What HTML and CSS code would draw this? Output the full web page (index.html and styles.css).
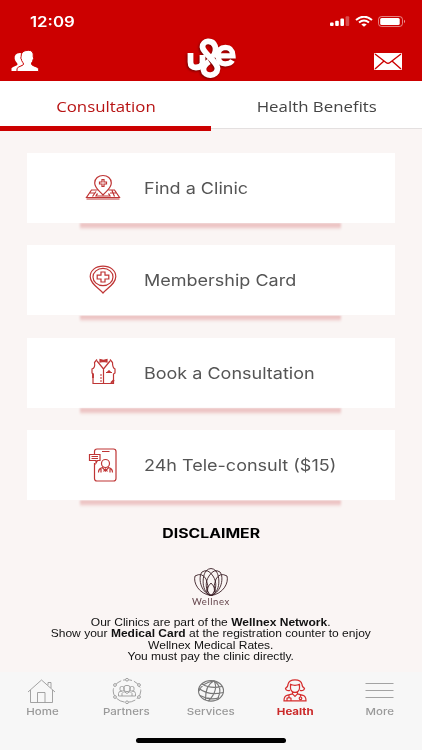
FILE: index.html
```
<!DOCTYPE html>
<html lang="en">
<head>
  <meta charset="UTF-8" />
  <meta name="viewport" content="width=device-width, initial-scale=1.0" />
  <title>Health - Consultation</title>
  <link rel="stylesheet" href="styles.css">
</head>
<body>
  <header class="header">
    <div class="statusbar">
      <span class="time wide">12:09</span>
      <div class="status-icons">
        <svg width="20" height="12" viewBox="0 0 20 12" fill="#fff">
          <rect x="0" y="6.5" width="3.6" height="3.5" rx="1"/>
          <rect x="5.2" y="4.8" width="3.6" height="5.2" rx="1"/>
          <rect x="10.4" y="2.6" width="3.6" height="7.4" rx="1"/>
          <rect x="15.6" y="0.2" width="3.6" height="9.8" rx="1" opacity=".3"/>
        </svg>
        <svg width="18" height="12" viewBox="0 0 18 12" fill="none" stroke="#fff" stroke-width="2">
          <path d="M1 4Q9-2.600 17 4M4 6.600Q9 2.500 14 6.600"/>
          <path d="M6.300 8.500Q9 6.400 11.700 8.500L9 10.800Z" fill="#fff" stroke="none"/>
        </svg>
        <svg width="28" height="12" viewBox="0 0 28 12">
          <rect x=".5" y=".5" width="24" height="10" rx="3" fill="none" stroke="#fff" opacity=".5"/>
          <rect x="2.200" y="2" width="19.500" height="7" rx="1.500" fill="#fff"/>
          <path d="M26 3.800Q28.200 5.500 26 7.200Z" fill="#fff" opacity=".6"/>
        </svg>
      </div>
    </div>
    <div class="navbar">
      <svg class="people" width="29" height="22" viewBox="0 0 29 22" fill="#fff">
        <path d="M.5 21V18.300Q1 17.300 6 15.300Q7.200 14.500 6 13Q4.200 11.400 3.700 9Q2.900 3.500 8.800 3Q11.500 3 13 5L14 14L10 16V21Z"/>
        <path d="M6 21.500V18.500Q6.700 17 11.700 15.200Q13.400 14.200 11.900 12.600Q10.200 10.300 10.300 9Q9.300 8.500 10.100 6.700Q9.700 .500 17.200 .300Q23 .200 22.200 6.700Q23.200 8.600 22.200 9.300Q21.800 11.600 20.600 13Q20.100 14.800 21.700 15.400Q26.900 17.200 27.700 18.700V21.500Z" stroke="#c00"/>
      </svg>
      <svg class="logo" width="56" height="46" viewBox="0 0 56 46" fill="none">
        <g class="logo-marks" stroke="#fff" stroke-width="5.800">
          <path d="M6.500 17V26Q6.500 31.500 12 31.500Q17.500 31.500 18.500 27.500V19"/>
          <path d="M29 20.500C31.500 17 32.500 14 31 10C28.500 3.500 18.500 4 18.500 11C19 17.500 33.500 25.500 33.500 32.500C33 41 20.500 41 19.500 34C19 30 22 27.500 25 25.500"/>
          <path d="M35.500 19.800H49Q48.500 11.300 41.500 11.300Q34 11.500 34 19.800Q34.500 28 41.500 27.800Q46.500 27.800 48.500 24.500" stroke-width="5.200"/>
        </g>
      </svg>
      <svg class="mail" width="28" height="17" viewBox="0 0 28 17">
        <rect width="28" height="17" rx="1" fill="#fff"/>
        <path d="M1 1L12 9.500Q14 11 16 9.500L27 1M1 16L10 8M27 16L18 8" fill="none" stroke="#c00" stroke-width="1.400"/>
      </svg>
    </div>
  </header>

  <nav class="tabs">
    <div class="tab active"><span class="wide">Consultation</span></div>
    <div class="tab"><span class="wide">Health Benefits</span></div>
  </nav>

  <main class="main">
    <div class="card">
      <svg width="36" height="36" viewBox="0 0 36 36" class="icon">
        <g transform="translate(0 3.500)">
          <path d="M18 21.500C14 17 9.700 14.500 9.700 9.500C9.700 5 13.500 2 18 2S26.300 5 26.300 9.500C26.300 14.500 22 17 18 21.500Z"/>
          <path d="M17 6H19V8.500H21.500V10.500H19V13H17V10.500H14.500V8.500H17Z"/>
          <path d="M12.500 16.500H6.500L1.500 24H34.500L29.500 16.500H23.500M1.500 25.500H34.500M11 18L7.500 23M4.500 19.500H9.500M13 20.500H12L11 22.500H25L24 20.500H23M27 17L29.500 23M25 19.500H31"/>
        </g>
      </svg>
      <span class="label wide">Find a Clinic</span>
    </div>
    <div class="card">
      <svg width="36" height="36" viewBox="0 0 36 36" class="icon">
        <path d="M18 31C13 25.500 5.200 21.500 5.200 14.500C5.200 8.500 10.500 4.200 18 4.200S30.800 8.500 30.800 14.500C30.800 21.500 23 25.500 18 31Z"/>
        <ellipse cx="18" cy="15" rx="10" ry="8.700"/>
        <path d="M16 10H20V13.200H23.800V17H20V20H16V17H12.200V13.200H16Z"/>
      </svg>
      <span class="label wide">Membership Card</span>
    </div>
    <div class="card">
      <svg width="36" height="36" viewBox="0 0 36 36" class="icon">
        <path d="M12 4.500L9.500 7.500Q10.500 13 7 14V18L8 19V28.500H28.500V19L30 18V14Q27.500 13 27.500 7.500L25 4.500M12 6L18.500 14L25 6M18.500 14V28.500M21 17.500H27M22.500 17L24 15.800L25.500 17"/>
        <path d="M15 4.500L18.500 5.300L22 4.500V7L18.500 6.300L15 7Z" fill="#bf3535"/>
        <path d="M15.500 20H16.500M15.500 23H16.500M15.500 26H16.500M8 18.500V23M26 28L29 25" stroke-width="1.800"/>
      </svg>
      <span class="label wide">Book a Consultation</span>
    </div>
    <div class="card">
      <svg width="36" height="36" viewBox="0 0 36 36" class="icon">
        <path d="M9.500 8V4.500Q9.500 2 12 2H28.500Q31 2 31 4.500V31.500Q31 34 28.500 34H12Q9.500 34 9.500 31.500V16"/>
        <path d="M17 4.500H24.500M4.500 7.500H15V13.500H12.500L11 16V13.500H4.500ZM6.500 9.500H13M6.500 11.500H13"/>
        <ellipse cx="20.500" cy="16.500" rx="4" ry="4"/>
        <path d="M13.500 25.500Q13.500 21.500 17.500 20.700L20.500 24L23.500 20.700Q27.500 21.500 27.500 25.500M16 22V25.500M25 22V25.500M18.500 24.500L20.500 22L22.500 24.500"/>
      </svg>
      <span class="label wide">24h Tele-consult ($15)</span>
    </div>

    <section class="disclaimer">
      <h2><span class="wide">DISCLAIMER</span></h2>
      <svg width="36" height="30" viewBox="0 0 36 30" class="lotus">
        <path d="M18 16Q12.500 22 14 25.500Q15.500 28.500 18 28.500T22 25.500Q23.500 22 18 16Z"/>
        <path d="M18 28.500C8 25 9 9 13 4Q18-1 23 4C27 9 28 25 18 28.500Z"/>
        <path d="M18 28.500C7 25 5 10 9 5Q15 1 20 9C24 15 24 23 18 28.500ZM18 28.500C29 25 31 10 27 5Q21 1 16 9C12 15 12 23 18 28.500Z"/>
        <path d="M18 28.500C6 27 0 16 2 9Q9 5 13 12Q16 19 14.500 25M18 28.500C30 27 36 16 34 9Q27 5 23 12Q20 19 21.500 25"/>
      </svg>
      <div class="brand"><span class="wide">Wellnex</span></div>
      <p><span class="wide">Our Clinics are part of the <b>Wellnex Network</b>.</span></p>
      <p><span class="wide">Show your <b>Medical Card</b> at the registration counter to enjoy</span></p>
      <p><span class="wide">Wellnex Medical Rates.</span></p>
      <p><span class="wide">You must pay the clinic directly.</span></p>
    </section>
  </main>

  <footer class="tabbar">
    <div class="items">
      <div class="item">
        <svg width="32" height="26" viewBox="0 0 32 26">
          <path d="M2 14L15.500 2L29 14M4.500 12V24.500H26.500V12M11.500 24.500V14.500H19V24.500M22 7V4.500H25V10"/>
        </svg>
        <span class="wide">Home</span>
      </div>
      <div class="item">
        <svg width="32" height="26" viewBox="0 0 32 26">
          <ellipse cx="16" cy="13" rx="13.800" ry="11.300" stroke-dasharray="9 2"/>
          <g fill="#f7f7f7"><circle cx="16" cy="1.700" r="1.400"/><circle cx="4" cy="7" r="1.400"/><circle cx="28" cy="7" r="1.400"/><circle cx="4" cy="19" r="1.400"/><circle cx="28" cy="19" r="1.400"/><circle cx="16" cy="24.300" r="1.400"/></g>
          <path d="M7.500 18V15.500Q7.500 13 11 13M24.500 18V15.500Q24.500 13 21 13M7.500 18H24.500M11 18V15.500L13 13.500L16 15.500L19 13.500L21 15.500V18"/>
          <rect x="13" y="7.500" width="6" height="6" rx="2"/><rect x="9" y="8.500" width="4" height="4.500" rx="1.500"/><rect x="19" y="8.500" width="4" height="4.500" rx="1.500"/>
        </svg>
        <span class="wide">Partners</span>
      </div>
      <div class="item">
        <svg width="32" height="26" viewBox="0 0 32 26" class="globe">
          <ellipse cx="16" cy="12.800" rx="12.500" ry="10.300"/>
          <path d="M19 2.800Q10 7.500 10.500 22M19 2.800Q24 12 13.500 23M19 2.800Q7 5 4 13M19 2.800Q29 10 22 21.500M7 6Q15 11 27 8.500M4 10.500Q14 18 28.500 14.500M5 17.500Q14 22.500 24 20"/>
        </svg>
        <span class="wide">Services</span>
      </div>
      <div class="item active">
        <svg width="32" height="26" viewBox="0 0 32 26">
          <g transform="translate(0 -.700)">
            <path d="M11 13Q7 14 6.500 11Q9 10 9 7Q10 2.500 16 2.500T23 7Q23 10 25.500 11Q25 14 21 13M11.500 7Q16 9 20.500 7V11Q20 15 16 15T11.500 11ZM13.500 14.500V16.500L16 19L18.500 16.500V14.500M13.500 16.500L8 18Q5 19 5 23.500H27Q27 19 24 18L18.500 16.500M10 17.500V20.500M8 23V21Q10 19.500 12 21V23M21.500 17.500V19.500"/>
            <circle cx="21.500" cy="21" r="1.300"/>
          </g>
        </svg>
        <span class="wide">Health</span>
      </div>
      <div class="item">
        <svg width="32" height="26" viewBox="0 0 32 26"><path d="M1.500 5.500H29.500M1.500 12.500H29.500M1.500 19.500H29.500"/></svg>
        <span class="wide">More</span>
      </div>
    </div>
    <div class="home-indicator"></div>
  </footer>
</body>
</html>
```
FILE: styles.css
```
* {
  box-sizing: border-box;
  margin: 0;
  padding: 0;
}
body {
  width: 422px;
  height: 750px;
  overflow: hidden;
  display: flex;
  flex-direction: column;
  background: #faf5f4;
  font-family: Inter, "Liberation Sans", sans-serif;
}
svg {
  display: block;
  flex: none;
}
.wide {
  display: inline-block;
  white-space: nowrap;
  transform: scaleX(1.12);
}
.header {
  height: 81px;
  background: #c00;
  color: #fff;
}
.statusbar {
  height: 44px;
  padding: 11px 16px 0 30px;
  display: flex;
  justify-content: space-between;
}
.time {
  font-size: 14px;
  font-weight: 600;
  line-height: 21px;
  transform: scaleX(1.2);
  transform-origin: left;
}
.status-icons {
  display: flex;
  gap: 5px;
  padding-top: 5px;
}
.navbar {
  display: flex;
  justify-content: space-between;
  padding: 0 20px 0 11px;
}
.people {
  margin-top: 6px;
}
.logo {
  margin: -8px 0 0 9px;
}
.logo-marks {
  filter: drop-shadow(-1px 1px 1px #700);
}
.mail {
  margin-top: 9px;
}
.tabs {
  display: flex;
  height: 50px;
}
.tab {
  flex: 1;
  height: 48px;
  background: #fff;
  border-bottom: 1px solid #e4e0e0;
  text-align: center;
  font-family: "Open Sans", sans-serif;
  font-size: 14.5px;
  line-height: 51px;
  color: #444;
}
.tab .wide {
  transform: scaleX(1.16);
}
.tab.active {
  height: 50px;
  border-bottom: 5px solid #c00;
  color: #b81414;
}
.main {
  flex: 1;
  padding: 22px 27px 0;
}
.card {
  position: relative;
  display: flex;
  align-items: center;
  height: 70px;
  margin-bottom: 22.4px;
  padding-left: 58px;
  background: #fff;
}
/* red strip under the card */
.card::after {
  content: "";
  position: absolute;
  left: 53px;
  top: 70px;
  width: 261px;
  height: 7px;
  background: linear-gradient(#eabdbe, #eec8c8 50%, #faf5f4);
  filter: blur(.8px);
  clip-path: inset(0 -3px -3px);
}
.icon {
  fill: none;
  stroke: #bf3535;
  stroke-width: 1.2;
}
.label {
  margin-left: 23px;
  font-size: 16px;
  color: #555;
  transform: scaleX(1.125);
  transform-origin: left;
}
.disclaimer {
  padding-top: 1.6px;
  text-align: center;
  color: #111;
}
.disclaimer h2 {
  font-size: 13px;
  line-height: 19px;
  font-weight: 700;
  color: #000;
}
.disclaimer h2 .wide {
  transform: scaleX(1.215);
}
.lotus {
  margin: 23.5px auto 0;
  fill: none;
  stroke: #3a1e25;
  stroke-width: .9;
}
.brand {
  height: 20.5px;
  font-family: Lato, sans-serif;
  font-size: 8.5px;
  line-height: 11px;
  letter-spacing: .5px;
  color: #63434a;
}
.disclaimer p {
  height: 11.2px;
  font-family: "Liberation Sans", sans-serif;
  font-size: 10.5px;
  line-height: 11px;
}
.disclaimer p .wide {
  transform: scaleX(1.145);
}
.tabbar {
  height: 78px;
  background: #f7f7f7;
}
.items {
  display: flex;
  padding-top: 6px;
}
.item {
  flex: 1;
  display: flex;
  flex-direction: column;
  align-items: center;
  font-size: 9.5px;
  font-weight: 500;
  line-height: 16px;
  color: #999;
}
.item .wide {
  transform: scaleX(1.21);
}
.item svg {
  fill: none;
  stroke: #999;
  stroke-width: .9;
}
.item .globe {
  stroke: #777;
  stroke-width: 1.1;
}
.item.active {
  color: #cb2a2a;
  font-weight: 700;
}
.item.active svg {
  stroke: #d52d2d;
  stroke-width: 1.2;
}
.home-indicator {
  width: 150px;
  height: 5px;
  margin: 17.5px auto 0;
  border-radius: 3px;
  background: #000;
}
```
